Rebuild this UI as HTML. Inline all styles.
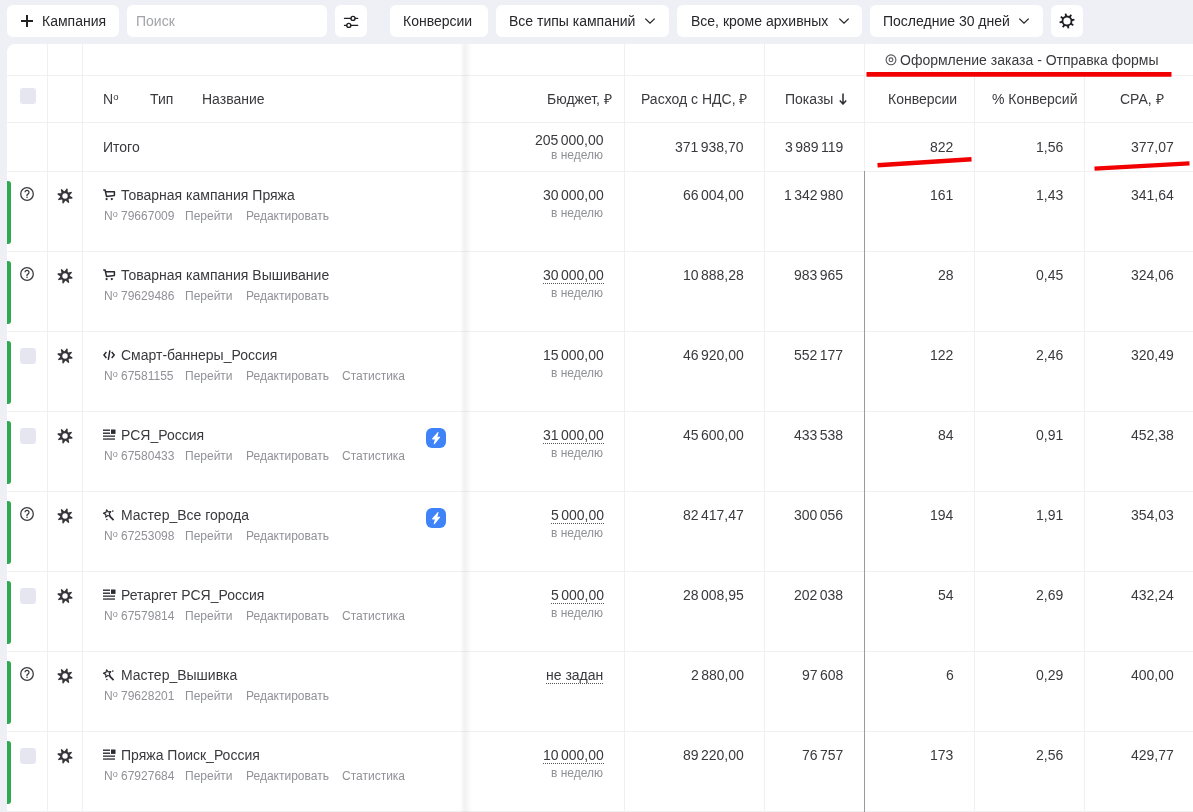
<!DOCTYPE html>
<html><head><meta charset="utf-8"><style>
html,body{margin:0;padding:0;}
body{width:1193px;height:812px;overflow:hidden;position:relative;background:#eff0f6;font-family:"Liberation Sans",sans-serif;color:#2b2b2b;}
.t{position:absolute;white-space:nowrap;will-change:transform;}
</style></head><body>
<div style="position:absolute;left:7px;top:5px;width:112px;height:32px;background:#fff;border-radius:6px;"></div>
<div style="position:absolute;left:21px;top:20px;width:12px;height:2px;background:#222;"></div>
<div style="position:absolute;left:26px;top:15px;width:2px;height:12px;background:#222;"></div>
<div class="t" style="left:42px;top:13.65px;font-size:14px;line-height:14px;color:#26262b;">Кампания</div>
<div style="position:absolute;left:127px;top:5px;width:200px;height:32px;background:#fff;border-radius:6px;"></div>
<div class="t" style="left:136px;top:13.65px;font-size:14px;line-height:14px;color:#a3a4a8;">Поиск</div>
<div style="position:absolute;left:335px;top:5px;width:32px;height:32px;background:#fff;border-radius:6px;"></div>
<svg style="position:absolute;left:343px;top:13px" width="16" height="16" viewBox="0 0 16 16"><g stroke="#1f1f24" stroke-width="1.4" fill="none" stroke-linecap="round"><line x1="1.5" y1="5.4" x2="14.6" y2="5.4"/><line x1="1.5" y1="12.4" x2="14.6" y2="12.4"/><circle cx="10" cy="5.4" r="2" fill="#fff"/><circle cx="5.8" cy="12.4" r="2" fill="#fff"/></g></svg>
<div style="position:absolute;left:390px;top:5px;width:98px;height:32px;background:#fff;border-radius:6px;"></div>
<div class="t" style="left:403px;top:13.65px;font-size:14px;line-height:14px;color:#26262b;">Конверсии</div>
<div style="position:absolute;left:496px;top:5px;width:173px;height:32px;background:#fff;border-radius:6px;"></div>
<div class="t" style="left:509px;top:13.65px;font-size:14px;line-height:14px;color:#26262b;">Все типы кампаний</div>
<svg style="position:absolute;left:643.5px;top:15px" width="12" height="12" viewBox="0 0 12 12"><path d="M1.3 3.6 L6 8.1 L10.7 3.6" stroke="#222" stroke-width="1.3" fill="none"/></svg>
<div style="position:absolute;left:677px;top:5px;width:185px;height:32px;background:#fff;border-radius:6px;"></div>
<div class="t" style="left:691px;top:13.65px;font-size:14px;line-height:14px;color:#26262b;">Все, кроме архивных</div>
<svg style="position:absolute;left:837.5px;top:15px" width="12" height="12" viewBox="0 0 12 12"><path d="M1.3 3.6 L6 8.1 L10.7 3.6" stroke="#222" stroke-width="1.3" fill="none"/></svg>
<div style="position:absolute;left:870px;top:5px;width:173px;height:32px;background:#fff;border-radius:6px;"></div>
<div class="t" style="left:883px;top:13.65px;font-size:14px;line-height:14px;color:#26262b;">Последние 30 дней</div>
<svg style="position:absolute;left:1018px;top:15px" width="12" height="12" viewBox="0 0 12 12"><path d="M1.3 3.6 L6 8.1 L10.7 3.6" stroke="#222" stroke-width="1.3" fill="none"/></svg>
<div style="position:absolute;left:1051px;top:5px;width:32px;height:32px;background:#fff;border-radius:6px;"></div>
<svg style="position:absolute;left:1056.8px;top:10.899999999999999px" width="20" height="20" viewBox="0 0 20 20"><path fill="#1f1f24" fill-rule="evenodd" d="M8.01 4.98 L7.73 2.75 L9.39 2.42 L9.96 4.60 L11.08 4.71 L12.14 5.04 L13.52 3.26 L14.93 4.21 L13.79 6.16 L14.50 7.02 L15.02 8.01 L17.25 7.73 L17.58 9.39 L15.40 9.96 L15.29 11.08 L14.96 12.14 L16.74 13.52 L15.79 14.93 L13.84 13.79 L12.98 14.50 L11.99 15.02 L12.27 17.25 L10.61 17.58 L10.04 15.40 L8.92 15.29 L7.86 14.96 L6.48 16.74 L5.07 15.79 L6.21 13.84 L5.50 12.98 L4.98 11.99 L2.75 12.27 L2.42 10.61 L4.60 10.04 L4.71 8.92 L5.04 7.86 L3.26 6.48 L4.21 5.07 L6.16 6.21 L7.02 5.50Z M13.60 10.00 A3.6 3.6 0 1 0 6.40 10.00 A3.6 3.6 0 1 0 13.60 10.00Z"/></svg>
<div style="position:absolute;left:7px;top:44px;width:1200px;height:800px;background:#fff;border-top-left-radius:8px;"></div>
<div style="position:absolute;left:7px;top:75px;width:1193px;height:1px;background:#f0f0f3;"></div>
<div style="position:absolute;left:7px;top:122px;width:1193px;height:1px;background:#f0f0f3;"></div>
<div style="position:absolute;left:7px;top:171px;width:1193px;height:1px;background:#f0f0f3;"></div>
<div style="position:absolute;left:7px;top:251px;width:1193px;height:1px;background:#f0f0f3;"></div>
<div style="position:absolute;left:7px;top:331px;width:1193px;height:1px;background:#f0f0f3;"></div>
<div style="position:absolute;left:7px;top:411px;width:1193px;height:1px;background:#f0f0f3;"></div>
<div style="position:absolute;left:7px;top:491px;width:1193px;height:1px;background:#f0f0f3;"></div>
<div style="position:absolute;left:7px;top:571px;width:1193px;height:1px;background:#f0f0f3;"></div>
<div style="position:absolute;left:7px;top:651px;width:1193px;height:1px;background:#f0f0f3;"></div>
<div style="position:absolute;left:7px;top:731px;width:1193px;height:1px;background:#f0f0f3;"></div>
<div style="position:absolute;left:7px;top:811px;width:1193px;height:1px;background:#f0f0f3;"></div>
<div style="position:absolute;left:47px;top:44px;width:1px;height:770px;background:#f0f0f3;"></div>
<div style="position:absolute;left:82px;top:44px;width:1px;height:770px;background:#f0f0f3;"></div>
<div style="position:absolute;left:624px;top:44px;width:1px;height:770px;background:#f0f0f3;"></div>
<div style="position:absolute;left:764px;top:44px;width:1px;height:770px;background:#f0f0f3;"></div>
<div style="position:absolute;left:974px;top:75px;width:1px;height:740px;background:#f0f0f3;"></div>
<div style="position:absolute;left:1084px;top:75px;width:1px;height:740px;background:#f0f0f3;"></div>
<div style="position:absolute;left:864px;top:44px;width:1px;height:127px;background:#f0f0f3;"></div>
<div style="position:absolute;left:864px;top:171px;width:1px;height:650px;background:#9a9a9e;"></div>
<div style="position:absolute;left:461px;top:44px;width:11px;height:770px;background:linear-gradient(to right, rgba(0,0,0,0.015), rgba(0,0,0,0.05) 35%, rgba(0,0,0,0) 100%);"></div>
<svg style="position:absolute;left:884px;top:53px" width="14" height="14" viewBox="0 0 14 14"><circle cx="7" cy="6.8" r="4.9" stroke="#55555a" stroke-width="1.1" fill="none"/><circle cx="7" cy="6.8" r="1.9" stroke="#55555a" stroke-width="1.1" fill="none"/></svg>
<div class="t" style="left:900px;top:53.15px;font-size:14px;line-height:14px;color:#3a3a3e;">Оформление заказа - Отправка формы</div>
<svg style="position:absolute;left:0;top:0" width="1193" height="812"><g stroke="#f20000" stroke-linecap="butt" fill="none"><line x1="866.5" y1="74.4" x2="1171.5" y2="74.4" stroke-width="4.8"/><line x1="877.5" y1="165.3" x2="971.5" y2="159.3" stroke-width="4.6"/><line x1="1094.5" y1="168.6" x2="1189.5" y2="163.4" stroke-width="4.4"/></g></svg>
<div style="position:absolute;left:20px;top:88px;width:16px;height:16px;background:#e5e6f0;border-radius:3px;"></div>
<div class="t" style="left:103px;top:92.15px;font-size:14px;line-height:14px;color:#3a3a3e;">N<span style="font-size:9.5px;position:relative;top:-4px">o</span></div>
<div class="t" style="left:149.5px;top:92.15px;font-size:14px;line-height:14px;color:#3a3a3e;">Тип</div>
<div class="t" style="left:202px;top:92.15px;font-size:14px;line-height:14px;color:#3a3a3e;">Название</div>
<div class="t" style="right:581px;top:92.15px;font-size:14px;line-height:14px;color:#3a3a3e;text-align:right;">Бюджет, ₽</div>
<div class="t" style="right:445.5px;top:92.15px;font-size:14px;line-height:14px;color:#3a3a3e;text-align:right;">Расход с НДС, ₽</div>
<div class="t" style="right:359.5px;top:92.15px;font-size:14px;line-height:14px;color:#3a3a3e;text-align:right;">Показы</div>
<svg style="position:absolute;left:839px;top:93px" width="8" height="12" viewBox="0 0 8 12"><path d="M4 0.5V11M0.8 7.6L4 11L7.2 7.6" stroke="#2b2b30" stroke-width="1.5" fill="none"/></svg>
<div class="t" style="right:236px;top:92.15px;font-size:14px;line-height:14px;color:#3a3a3e;text-align:right;">Конверсии</div>
<div class="t" style="right:115px;top:92.15px;font-size:14px;line-height:14px;color:#3a3a3e;text-align:right;">% Конверсий</div>
<div class="t" style="right:29px;top:92.15px;font-size:14px;line-height:14px;color:#3a3a3e;text-align:right;">CPA, ₽</div>
<div class="t" style="left:103px;top:140.15px;font-size:14px;line-height:14px;color:#3a3a3e;">Итого</div>
<div class="t" style="right:589.5px;top:133.15px;font-size:14px;line-height:14px;color:#3a3a3e;text-align:right;word-spacing:-1.5px;">205 000,00</div>
<div class="t" style="right:589.5px;top:149.34px;font-size:12px;line-height:12px;color:#909197;text-align:right;">в неделю</div>
<div class="t" style="right:449.5px;top:140.15px;font-size:14px;line-height:14px;color:#3a3a3e;text-align:right;word-spacing:-1.5px;">371 938,70</div>
<div class="t" style="right:350px;top:140.15px;font-size:14px;line-height:14px;color:#3a3a3e;text-align:right;word-spacing:-1.5px;">3 989 119</div>
<div class="t" style="right:239.5px;top:140.15px;font-size:14px;line-height:14px;color:#3a3a3e;text-align:right;">822</div>
<div class="t" style="right:129.5px;top:140.15px;font-size:14px;line-height:14px;color:#3a3a3e;text-align:right;">1,56</div>
<div class="t" style="right:19px;top:140.15px;font-size:14px;line-height:14px;color:#3a3a3e;text-align:right;">377,07</div>
<div style="position:absolute;left:7px;top:181px;width:4px;height:63px;background:#2fa84f;border-radius:0 3px 3px 0;"></div>
<svg style="position:absolute;left:19px;top:186px" width="16" height="16" viewBox="0 0 16 16"><circle cx="8" cy="8" r="6.3" stroke="#3a3a40" stroke-width="1.3" fill="none"/><path d="M6 6.3a2 2 0 1 1 2.9 1.8c-0.6 0.3-0.9 0.7-0.9 1.3v0.5" stroke="#3a3a40" stroke-width="1.3" fill="none"/><circle cx="8" cy="11.3" r="0.8" fill="#3a3a40"/></svg>
<svg style="position:absolute;left:54.8px;top:185.6px" width="20" height="20" viewBox="0 0 20 20"><path fill="#35353d" fill-rule="evenodd" d="M9.87 5.10 L11.59 2.47 L12.65 2.77 L12.71 5.92 L13.05 6.17 L13.37 6.44 L16.45 5.80 L16.98 6.76 L14.80 9.03 L14.87 9.45 L14.90 9.87 L17.53 11.59 L17.23 12.65 L14.08 12.71 L13.83 13.05 L13.56 13.37 L14.20 16.45 L13.24 16.98 L10.97 14.80 L10.55 14.87 L10.13 14.90 L8.41 17.53 L7.35 17.23 L7.29 14.08 L6.95 13.83 L6.63 13.56 L3.55 14.20 L3.02 13.24 L5.20 10.97 L5.13 10.55 L5.10 10.13 L2.47 8.41 L2.77 7.35 L5.92 7.29 L6.17 6.95 L6.44 6.63 L5.80 3.55 L6.76 3.02 L9.03 5.20 L9.45 5.13Z M12.70 10.00 A2.7 2.7 0 1 0 7.30 10.00 A2.7 2.7 0 1 0 12.70 10.00Z"/></svg>
<svg style="position:absolute;left:103px;top:189px" width="14" height="12" viewBox="0 0 14 12"><path d="M0.2 1H2.1L3.5 7.4L11.4 6.6V2.7H2.8" stroke="#2b2b33" stroke-width="1.5" fill="none" stroke-linejoin="round"/><circle cx="3.6" cy="10.1" r="1.15" fill="#2b2b33"/><circle cx="8.8" cy="10.1" r="1.15" fill="#2b2b33"/></svg>
<div class="t" style="left:121.2px;top:188.15px;font-size:14px;line-height:14px;color:#3a3a3e;">Товарная кампания Пряжа</div>
<div class="t" style="left:103.5px;top:209.84px;font-size:12px;line-height:12px;color:#909197;">N<span style="font-size:9px;position:relative;top:-3.2px">o</span> 79667009</div>
<div class="t" style="left:184.8px;top:209.84px;font-size:12px;line-height:12px;color:#909197;">Перейти</div>
<div class="t" style="left:245.8px;top:209.84px;font-size:12px;line-height:12px;color:#909197;">Редактировать</div>
<div class="t" style="right:589.5px;top:188.15px;font-size:14px;line-height:14px;color:#3a3a3e;text-align:right;word-spacing:-1.5px;">30 000,00</div>
<div class="t" style="right:589.5px;top:207.34px;font-size:12px;line-height:12px;color:#909197;text-align:right;">в неделю</div>
<div class="t" style="right:449.5px;top:188.15px;font-size:14px;line-height:14px;color:#3a3a3e;text-align:right;word-spacing:-1.5px;">66 004,00</div>
<div class="t" style="right:350px;top:188.15px;font-size:14px;line-height:14px;color:#3a3a3e;text-align:right;word-spacing:-1.5px;">1 342 980</div>
<div class="t" style="right:239.5px;top:188.15px;font-size:14px;line-height:14px;color:#3a3a3e;text-align:right;">161</div>
<div class="t" style="right:129.5px;top:188.15px;font-size:14px;line-height:14px;color:#3a3a3e;text-align:right;">1,43</div>
<div class="t" style="right:19px;top:188.15px;font-size:14px;line-height:14px;color:#3a3a3e;text-align:right;">341,64</div>
<div style="position:absolute;left:7px;top:261px;width:4px;height:63px;background:#2fa84f;border-radius:0 3px 3px 0;"></div>
<svg style="position:absolute;left:19px;top:266px" width="16" height="16" viewBox="0 0 16 16"><circle cx="8" cy="8" r="6.3" stroke="#3a3a40" stroke-width="1.3" fill="none"/><path d="M6 6.3a2 2 0 1 1 2.9 1.8c-0.6 0.3-0.9 0.7-0.9 1.3v0.5" stroke="#3a3a40" stroke-width="1.3" fill="none"/><circle cx="8" cy="11.3" r="0.8" fill="#3a3a40"/></svg>
<svg style="position:absolute;left:54.8px;top:265.6px" width="20" height="20" viewBox="0 0 20 20"><path fill="#35353d" fill-rule="evenodd" d="M9.87 5.10 L11.59 2.47 L12.65 2.77 L12.71 5.92 L13.05 6.17 L13.37 6.44 L16.45 5.80 L16.98 6.76 L14.80 9.03 L14.87 9.45 L14.90 9.87 L17.53 11.59 L17.23 12.65 L14.08 12.71 L13.83 13.05 L13.56 13.37 L14.20 16.45 L13.24 16.98 L10.97 14.80 L10.55 14.87 L10.13 14.90 L8.41 17.53 L7.35 17.23 L7.29 14.08 L6.95 13.83 L6.63 13.56 L3.55 14.20 L3.02 13.24 L5.20 10.97 L5.13 10.55 L5.10 10.13 L2.47 8.41 L2.77 7.35 L5.92 7.29 L6.17 6.95 L6.44 6.63 L5.80 3.55 L6.76 3.02 L9.03 5.20 L9.45 5.13Z M12.70 10.00 A2.7 2.7 0 1 0 7.30 10.00 A2.7 2.7 0 1 0 12.70 10.00Z"/></svg>
<svg style="position:absolute;left:103px;top:269px" width="14" height="12" viewBox="0 0 14 12"><path d="M0.2 1H2.1L3.5 7.4L11.4 6.6V2.7H2.8" stroke="#2b2b33" stroke-width="1.5" fill="none" stroke-linejoin="round"/><circle cx="3.6" cy="10.1" r="1.15" fill="#2b2b33"/><circle cx="8.8" cy="10.1" r="1.15" fill="#2b2b33"/></svg>
<div class="t" style="left:121.2px;top:268.15px;font-size:14px;line-height:14px;color:#3a3a3e;">Товарная кампания Вышивание</div>
<div class="t" style="left:103.5px;top:289.84px;font-size:12px;line-height:12px;color:#909197;">N<span style="font-size:9px;position:relative;top:-3.2px">o</span> 79629486</div>
<div class="t" style="left:184.8px;top:289.84px;font-size:12px;line-height:12px;color:#909197;">Перейти</div>
<div class="t" style="left:245.8px;top:289.84px;font-size:12px;line-height:12px;color:#909197;">Редактировать</div>
<div class="t" style="right:589.5px;top:268.15px;font-size:14px;line-height:14px;color:#3a3a3e;text-align:right;word-spacing:-1.5px;border-bottom:1px dotted #555;line-height:15px;">30 000,00</div>
<div class="t" style="right:589.5px;top:287.34px;font-size:12px;line-height:12px;color:#909197;text-align:right;">в неделю</div>
<div class="t" style="right:449.5px;top:268.15px;font-size:14px;line-height:14px;color:#3a3a3e;text-align:right;word-spacing:-1.5px;">10 888,28</div>
<div class="t" style="right:350px;top:268.15px;font-size:14px;line-height:14px;color:#3a3a3e;text-align:right;word-spacing:-1.5px;">983 965</div>
<div class="t" style="right:239.5px;top:268.15px;font-size:14px;line-height:14px;color:#3a3a3e;text-align:right;">28</div>
<div class="t" style="right:129.5px;top:268.15px;font-size:14px;line-height:14px;color:#3a3a3e;text-align:right;">0,45</div>
<div class="t" style="right:19px;top:268.15px;font-size:14px;line-height:14px;color:#3a3a3e;text-align:right;">324,06</div>
<div style="position:absolute;left:7px;top:341px;width:4px;height:63px;background:#2fa84f;border-radius:0 3px 3px 0;"></div>
<div style="position:absolute;left:20px;top:348px;width:16px;height:16px;background:#e5e6f0;border-radius:3px;"></div>
<svg style="position:absolute;left:54.8px;top:345.6px" width="20" height="20" viewBox="0 0 20 20"><path fill="#35353d" fill-rule="evenodd" d="M9.87 5.10 L11.59 2.47 L12.65 2.77 L12.71 5.92 L13.05 6.17 L13.37 6.44 L16.45 5.80 L16.98 6.76 L14.80 9.03 L14.87 9.45 L14.90 9.87 L17.53 11.59 L17.23 12.65 L14.08 12.71 L13.83 13.05 L13.56 13.37 L14.20 16.45 L13.24 16.98 L10.97 14.80 L10.55 14.87 L10.13 14.90 L8.41 17.53 L7.35 17.23 L7.29 14.08 L6.95 13.83 L6.63 13.56 L3.55 14.20 L3.02 13.24 L5.20 10.97 L5.13 10.55 L5.10 10.13 L2.47 8.41 L2.77 7.35 L5.92 7.29 L6.17 6.95 L6.44 6.63 L5.80 3.55 L6.76 3.02 L9.03 5.20 L9.45 5.13Z M12.70 10.00 A2.7 2.7 0 1 0 7.30 10.00 A2.7 2.7 0 1 0 12.70 10.00Z"/></svg>
<svg style="position:absolute;left:103px;top:349px" width="13" height="11" viewBox="0 0 13 11"><path d="M3.4 3.1L0.9 6L3.4 8.9M8.7 3.1L11.2 6L8.7 8.9M6.9 1.3L5.3 10.8" stroke="#2b2b33" stroke-width="1.5" fill="none"/></svg>
<div class="t" style="left:121.2px;top:348.15px;font-size:14px;line-height:14px;color:#3a3a3e;">Смарт-баннеры_Россия</div>
<div class="t" style="left:103.5px;top:369.84px;font-size:12px;line-height:12px;color:#909197;">N<span style="font-size:9px;position:relative;top:-3.2px">o</span> 67581155</div>
<div class="t" style="left:184.8px;top:369.84px;font-size:12px;line-height:12px;color:#909197;">Перейти</div>
<div class="t" style="left:245.8px;top:369.84px;font-size:12px;line-height:12px;color:#909197;">Редактировать</div>
<div class="t" style="left:342px;top:369.84px;font-size:12px;line-height:12px;color:#909197;">Статистика</div>
<div class="t" style="right:589.5px;top:348.15px;font-size:14px;line-height:14px;color:#3a3a3e;text-align:right;word-spacing:-1.5px;">15 000,00</div>
<div class="t" style="right:589.5px;top:367.34px;font-size:12px;line-height:12px;color:#909197;text-align:right;">в неделю</div>
<div class="t" style="right:449.5px;top:348.15px;font-size:14px;line-height:14px;color:#3a3a3e;text-align:right;word-spacing:-1.5px;">46 920,00</div>
<div class="t" style="right:350px;top:348.15px;font-size:14px;line-height:14px;color:#3a3a3e;text-align:right;word-spacing:-1.5px;">552 177</div>
<div class="t" style="right:239.5px;top:348.15px;font-size:14px;line-height:14px;color:#3a3a3e;text-align:right;">122</div>
<div class="t" style="right:129.5px;top:348.15px;font-size:14px;line-height:14px;color:#3a3a3e;text-align:right;">2,46</div>
<div class="t" style="right:19px;top:348.15px;font-size:14px;line-height:14px;color:#3a3a3e;text-align:right;">320,49</div>
<div style="position:absolute;left:7px;top:421px;width:4px;height:63px;background:#2fa84f;border-radius:0 3px 3px 0;"></div>
<div style="position:absolute;left:20px;top:428px;width:16px;height:16px;background:#e5e6f0;border-radius:3px;"></div>
<svg style="position:absolute;left:54.8px;top:425.6px" width="20" height="20" viewBox="0 0 20 20"><path fill="#35353d" fill-rule="evenodd" d="M9.87 5.10 L11.59 2.47 L12.65 2.77 L12.71 5.92 L13.05 6.17 L13.37 6.44 L16.45 5.80 L16.98 6.76 L14.80 9.03 L14.87 9.45 L14.90 9.87 L17.53 11.59 L17.23 12.65 L14.08 12.71 L13.83 13.05 L13.56 13.37 L14.20 16.45 L13.24 16.98 L10.97 14.80 L10.55 14.87 L10.13 14.90 L8.41 17.53 L7.35 17.23 L7.29 14.08 L6.95 13.83 L6.63 13.56 L3.55 14.20 L3.02 13.24 L5.20 10.97 L5.13 10.55 L5.10 10.13 L2.47 8.41 L2.77 7.35 L5.92 7.29 L6.17 6.95 L6.44 6.63 L5.80 3.55 L6.76 3.02 L9.03 5.20 L9.45 5.13Z M12.70 10.00 A2.7 2.7 0 1 0 7.30 10.00 A2.7 2.7 0 1 0 12.70 10.00Z"/></svg>
<svg style="position:absolute;left:103px;top:429px" width="13" height="11" viewBox="0 0 13 11"><g fill="#2b2b33"><rect x="0" y="0.5" width="7" height="1.4"/><rect x="0" y="3.5" width="7" height="1.4"/><rect x="8" y="0.5" width="4.5" height="4.4"/><rect x="0" y="6.5" width="12" height="1.3"/><rect x="0" y="9.4" width="12" height="1.3"/></g></svg>
<div class="t" style="left:121.2px;top:428.15px;font-size:14px;line-height:14px;color:#3a3a3e;">РСЯ_Россия</div>
<div class="t" style="left:103.5px;top:449.84px;font-size:12px;line-height:12px;color:#909197;">N<span style="font-size:9px;position:relative;top:-3.2px">o</span> 67580433</div>
<div class="t" style="left:184.8px;top:449.84px;font-size:12px;line-height:12px;color:#909197;">Перейти</div>
<div class="t" style="left:245.8px;top:449.84px;font-size:12px;line-height:12px;color:#909197;">Редактировать</div>
<div class="t" style="left:342px;top:449.84px;font-size:12px;line-height:12px;color:#909197;">Статистика</div>
<svg style="position:absolute;left:426px;top:428px" width="20" height="20" viewBox="0 0 20 20"><rect width="20" height="20" rx="6" fill="#3f83f8"/><path d="M12 4.6L6.6 10.9H9.6L8.3 15.6L13.6 9.2H10.7Z" fill="#fff" stroke="#fff" stroke-width="1.1" stroke-linejoin="round"/></svg>
<div class="t" style="right:589.5px;top:428.15px;font-size:14px;line-height:14px;color:#3a3a3e;text-align:right;word-spacing:-1.5px;border-bottom:1px dotted #555;line-height:15px;">31 000,00</div>
<div class="t" style="right:589.5px;top:447.34px;font-size:12px;line-height:12px;color:#909197;text-align:right;">в неделю</div>
<div class="t" style="right:449.5px;top:428.15px;font-size:14px;line-height:14px;color:#3a3a3e;text-align:right;word-spacing:-1.5px;">45 600,00</div>
<div class="t" style="right:350px;top:428.15px;font-size:14px;line-height:14px;color:#3a3a3e;text-align:right;word-spacing:-1.5px;">433 538</div>
<div class="t" style="right:239.5px;top:428.15px;font-size:14px;line-height:14px;color:#3a3a3e;text-align:right;">84</div>
<div class="t" style="right:129.5px;top:428.15px;font-size:14px;line-height:14px;color:#3a3a3e;text-align:right;">0,91</div>
<div class="t" style="right:19px;top:428.15px;font-size:14px;line-height:14px;color:#3a3a3e;text-align:right;">452,38</div>
<div style="position:absolute;left:7px;top:501px;width:4px;height:63px;background:#2fa84f;border-radius:0 3px 3px 0;"></div>
<svg style="position:absolute;left:19px;top:506px" width="16" height="16" viewBox="0 0 16 16"><circle cx="8" cy="8" r="6.3" stroke="#3a3a40" stroke-width="1.3" fill="none"/><path d="M6 6.3a2 2 0 1 1 2.9 1.8c-0.6 0.3-0.9 0.7-0.9 1.3v0.5" stroke="#3a3a40" stroke-width="1.3" fill="none"/><circle cx="8" cy="11.3" r="0.8" fill="#3a3a40"/></svg>
<svg style="position:absolute;left:54.8px;top:505.6px" width="20" height="20" viewBox="0 0 20 20"><path fill="#35353d" fill-rule="evenodd" d="M9.87 5.10 L11.59 2.47 L12.65 2.77 L12.71 5.92 L13.05 6.17 L13.37 6.44 L16.45 5.80 L16.98 6.76 L14.80 9.03 L14.87 9.45 L14.90 9.87 L17.53 11.59 L17.23 12.65 L14.08 12.71 L13.83 13.05 L13.56 13.37 L14.20 16.45 L13.24 16.98 L10.97 14.80 L10.55 14.87 L10.13 14.90 L8.41 17.53 L7.35 17.23 L7.29 14.08 L6.95 13.83 L6.63 13.56 L3.55 14.20 L3.02 13.24 L5.20 10.97 L5.13 10.55 L5.10 10.13 L2.47 8.41 L2.77 7.35 L5.92 7.29 L6.17 6.95 L6.44 6.63 L5.80 3.55 L6.76 3.02 L9.03 5.20 L9.45 5.13Z M12.70 10.00 A2.7 2.7 0 1 0 7.30 10.00 A2.7 2.7 0 1 0 12.70 10.00Z"/></svg>
<svg style="position:absolute;left:103px;top:508.5px" width="13" height="12" viewBox="0 0 13 12"><path d="M3.59 0.79 L5.17 2.86 L7.78 2.65 L6.29 4.80 L7.30 7.21 L4.80 6.46 L2.81 8.16 L2.75 5.55 L0.52 4.19 L2.99 3.33Z" stroke="#2b2b33" stroke-width="1.2" fill="none" stroke-linejoin="round"/><path d="M6.6 7.2L10.6 11.1" stroke="#2b2b33" stroke-width="1.7"/><circle cx="9.8" cy="2.1" r="0.8" fill="#2b2b33"/><circle cx="3.9" cy="10.4" r="0.75" fill="#2b2b33"/></svg>
<div class="t" style="left:121.2px;top:508.15px;font-size:14px;line-height:14px;color:#3a3a3e;">Мастер_Все города</div>
<div class="t" style="left:103.5px;top:529.84px;font-size:12px;line-height:12px;color:#909197;">N<span style="font-size:9px;position:relative;top:-3.2px">o</span> 67253098</div>
<div class="t" style="left:184.8px;top:529.84px;font-size:12px;line-height:12px;color:#909197;">Перейти</div>
<div class="t" style="left:245.8px;top:529.84px;font-size:12px;line-height:12px;color:#909197;">Редактировать</div>
<svg style="position:absolute;left:426px;top:508px" width="20" height="20" viewBox="0 0 20 20"><rect width="20" height="20" rx="6" fill="#3f83f8"/><path d="M12 4.6L6.6 10.9H9.6L8.3 15.6L13.6 9.2H10.7Z" fill="#fff" stroke="#fff" stroke-width="1.1" stroke-linejoin="round"/></svg>
<div class="t" style="right:589.5px;top:508.15px;font-size:14px;line-height:14px;color:#3a3a3e;text-align:right;word-spacing:-1.5px;border-bottom:1px dotted #555;line-height:15px;">5 000,00</div>
<div class="t" style="right:589.5px;top:527.34px;font-size:12px;line-height:12px;color:#909197;text-align:right;">в неделю</div>
<div class="t" style="right:449.5px;top:508.15px;font-size:14px;line-height:14px;color:#3a3a3e;text-align:right;word-spacing:-1.5px;">82 417,47</div>
<div class="t" style="right:350px;top:508.15px;font-size:14px;line-height:14px;color:#3a3a3e;text-align:right;word-spacing:-1.5px;">300 056</div>
<div class="t" style="right:239.5px;top:508.15px;font-size:14px;line-height:14px;color:#3a3a3e;text-align:right;">194</div>
<div class="t" style="right:129.5px;top:508.15px;font-size:14px;line-height:14px;color:#3a3a3e;text-align:right;">1,91</div>
<div class="t" style="right:19px;top:508.15px;font-size:14px;line-height:14px;color:#3a3a3e;text-align:right;">354,03</div>
<div style="position:absolute;left:7px;top:581px;width:4px;height:63px;background:#2fa84f;border-radius:0 3px 3px 0;"></div>
<div style="position:absolute;left:20px;top:588px;width:16px;height:16px;background:#e5e6f0;border-radius:3px;"></div>
<svg style="position:absolute;left:54.8px;top:585.6px" width="20" height="20" viewBox="0 0 20 20"><path fill="#35353d" fill-rule="evenodd" d="M9.87 5.10 L11.59 2.47 L12.65 2.77 L12.71 5.92 L13.05 6.17 L13.37 6.44 L16.45 5.80 L16.98 6.76 L14.80 9.03 L14.87 9.45 L14.90 9.87 L17.53 11.59 L17.23 12.65 L14.08 12.71 L13.83 13.05 L13.56 13.37 L14.20 16.45 L13.24 16.98 L10.97 14.80 L10.55 14.87 L10.13 14.90 L8.41 17.53 L7.35 17.23 L7.29 14.08 L6.95 13.83 L6.63 13.56 L3.55 14.20 L3.02 13.24 L5.20 10.97 L5.13 10.55 L5.10 10.13 L2.47 8.41 L2.77 7.35 L5.92 7.29 L6.17 6.95 L6.44 6.63 L5.80 3.55 L6.76 3.02 L9.03 5.20 L9.45 5.13Z M12.70 10.00 A2.7 2.7 0 1 0 7.30 10.00 A2.7 2.7 0 1 0 12.70 10.00Z"/></svg>
<svg style="position:absolute;left:103px;top:589px" width="13" height="11" viewBox="0 0 13 11"><g fill="#2b2b33"><rect x="0" y="0.5" width="7" height="1.4"/><rect x="0" y="3.5" width="7" height="1.4"/><rect x="8" y="0.5" width="4.5" height="4.4"/><rect x="0" y="6.5" width="12" height="1.3"/><rect x="0" y="9.4" width="12" height="1.3"/></g></svg>
<div class="t" style="left:121.2px;top:588.15px;font-size:14px;line-height:14px;color:#3a3a3e;">Ретаргет РСЯ_Россия</div>
<div class="t" style="left:103.5px;top:609.84px;font-size:12px;line-height:12px;color:#909197;">N<span style="font-size:9px;position:relative;top:-3.2px">o</span> 67579814</div>
<div class="t" style="left:184.8px;top:609.84px;font-size:12px;line-height:12px;color:#909197;">Перейти</div>
<div class="t" style="left:245.8px;top:609.84px;font-size:12px;line-height:12px;color:#909197;">Редактировать</div>
<div class="t" style="left:342px;top:609.84px;font-size:12px;line-height:12px;color:#909197;">Статистика</div>
<div class="t" style="right:589.5px;top:588.15px;font-size:14px;line-height:14px;color:#3a3a3e;text-align:right;word-spacing:-1.5px;border-bottom:1px dotted #555;line-height:15px;">5 000,00</div>
<div class="t" style="right:589.5px;top:607.34px;font-size:12px;line-height:12px;color:#909197;text-align:right;">в неделю</div>
<div class="t" style="right:449.5px;top:588.15px;font-size:14px;line-height:14px;color:#3a3a3e;text-align:right;word-spacing:-1.5px;">28 008,95</div>
<div class="t" style="right:350px;top:588.15px;font-size:14px;line-height:14px;color:#3a3a3e;text-align:right;word-spacing:-1.5px;">202 038</div>
<div class="t" style="right:239.5px;top:588.15px;font-size:14px;line-height:14px;color:#3a3a3e;text-align:right;">54</div>
<div class="t" style="right:129.5px;top:588.15px;font-size:14px;line-height:14px;color:#3a3a3e;text-align:right;">2,69</div>
<div class="t" style="right:19px;top:588.15px;font-size:14px;line-height:14px;color:#3a3a3e;text-align:right;">432,24</div>
<div style="position:absolute;left:7px;top:661px;width:4px;height:63px;background:#2fa84f;border-radius:0 3px 3px 0;"></div>
<svg style="position:absolute;left:19px;top:666px" width="16" height="16" viewBox="0 0 16 16"><circle cx="8" cy="8" r="6.3" stroke="#3a3a40" stroke-width="1.3" fill="none"/><path d="M6 6.3a2 2 0 1 1 2.9 1.8c-0.6 0.3-0.9 0.7-0.9 1.3v0.5" stroke="#3a3a40" stroke-width="1.3" fill="none"/><circle cx="8" cy="11.3" r="0.8" fill="#3a3a40"/></svg>
<svg style="position:absolute;left:54.8px;top:665.6px" width="20" height="20" viewBox="0 0 20 20"><path fill="#35353d" fill-rule="evenodd" d="M9.87 5.10 L11.59 2.47 L12.65 2.77 L12.71 5.92 L13.05 6.17 L13.37 6.44 L16.45 5.80 L16.98 6.76 L14.80 9.03 L14.87 9.45 L14.90 9.87 L17.53 11.59 L17.23 12.65 L14.08 12.71 L13.83 13.05 L13.56 13.37 L14.20 16.45 L13.24 16.98 L10.97 14.80 L10.55 14.87 L10.13 14.90 L8.41 17.53 L7.35 17.23 L7.29 14.08 L6.95 13.83 L6.63 13.56 L3.55 14.20 L3.02 13.24 L5.20 10.97 L5.13 10.55 L5.10 10.13 L2.47 8.41 L2.77 7.35 L5.92 7.29 L6.17 6.95 L6.44 6.63 L5.80 3.55 L6.76 3.02 L9.03 5.20 L9.45 5.13Z M12.70 10.00 A2.7 2.7 0 1 0 7.30 10.00 A2.7 2.7 0 1 0 12.70 10.00Z"/></svg>
<svg style="position:absolute;left:103px;top:668.5px" width="13" height="12" viewBox="0 0 13 12"><path d="M3.59 0.79 L5.17 2.86 L7.78 2.65 L6.29 4.80 L7.30 7.21 L4.80 6.46 L2.81 8.16 L2.75 5.55 L0.52 4.19 L2.99 3.33Z" stroke="#2b2b33" stroke-width="1.2" fill="none" stroke-linejoin="round"/><path d="M6.6 7.2L10.6 11.1" stroke="#2b2b33" stroke-width="1.7"/><circle cx="9.8" cy="2.1" r="0.8" fill="#2b2b33"/><circle cx="3.9" cy="10.4" r="0.75" fill="#2b2b33"/></svg>
<div class="t" style="left:121.2px;top:668.15px;font-size:14px;line-height:14px;color:#3a3a3e;">Мастер_Вышивка</div>
<div class="t" style="left:103.5px;top:689.84px;font-size:12px;line-height:12px;color:#909197;">N<span style="font-size:9px;position:relative;top:-3.2px">o</span> 79628201</div>
<div class="t" style="left:184.8px;top:689.84px;font-size:12px;line-height:12px;color:#909197;">Перейти</div>
<div class="t" style="left:245.8px;top:689.84px;font-size:12px;line-height:12px;color:#909197;">Редактировать</div>
<div class="t" style="right:589.5px;top:668.15px;font-size:14px;line-height:14px;color:#3a3a3e;text-align:right;border-bottom:1px dotted #555;line-height:15px;">не задан</div>
<div class="t" style="right:449.5px;top:668.15px;font-size:14px;line-height:14px;color:#3a3a3e;text-align:right;word-spacing:-1.5px;">2 880,00</div>
<div class="t" style="right:350px;top:668.15px;font-size:14px;line-height:14px;color:#3a3a3e;text-align:right;word-spacing:-1.5px;">97 608</div>
<div class="t" style="right:239.5px;top:668.15px;font-size:14px;line-height:14px;color:#3a3a3e;text-align:right;">6</div>
<div class="t" style="right:129.5px;top:668.15px;font-size:14px;line-height:14px;color:#3a3a3e;text-align:right;">0,29</div>
<div class="t" style="right:19px;top:668.15px;font-size:14px;line-height:14px;color:#3a3a3e;text-align:right;">400,00</div>
<div style="position:absolute;left:7px;top:741px;width:4px;height:63px;background:#2fa84f;border-radius:0 3px 3px 0;"></div>
<div style="position:absolute;left:20px;top:748px;width:16px;height:16px;background:#e5e6f0;border-radius:3px;"></div>
<svg style="position:absolute;left:54.8px;top:745.6px" width="20" height="20" viewBox="0 0 20 20"><path fill="#35353d" fill-rule="evenodd" d="M9.87 5.10 L11.59 2.47 L12.65 2.77 L12.71 5.92 L13.05 6.17 L13.37 6.44 L16.45 5.80 L16.98 6.76 L14.80 9.03 L14.87 9.45 L14.90 9.87 L17.53 11.59 L17.23 12.65 L14.08 12.71 L13.83 13.05 L13.56 13.37 L14.20 16.45 L13.24 16.98 L10.97 14.80 L10.55 14.87 L10.13 14.90 L8.41 17.53 L7.35 17.23 L7.29 14.08 L6.95 13.83 L6.63 13.56 L3.55 14.20 L3.02 13.24 L5.20 10.97 L5.13 10.55 L5.10 10.13 L2.47 8.41 L2.77 7.35 L5.92 7.29 L6.17 6.95 L6.44 6.63 L5.80 3.55 L6.76 3.02 L9.03 5.20 L9.45 5.13Z M12.70 10.00 A2.7 2.7 0 1 0 7.30 10.00 A2.7 2.7 0 1 0 12.70 10.00Z"/></svg>
<svg style="position:absolute;left:103px;top:749px" width="13" height="11" viewBox="0 0 13 11"><g fill="#2b2b33"><rect x="0" y="0.5" width="7" height="1.4"/><rect x="0" y="3.5" width="7" height="1.4"/><rect x="8" y="0.5" width="4.5" height="4.4"/><rect x="0" y="6.5" width="12" height="1.3"/><rect x="0" y="9.4" width="12" height="1.3"/></g></svg>
<div class="t" style="left:121.2px;top:748.15px;font-size:14px;line-height:14px;color:#3a3a3e;">Пряжа Поиск_Россия</div>
<div class="t" style="left:103.5px;top:769.84px;font-size:12px;line-height:12px;color:#909197;">N<span style="font-size:9px;position:relative;top:-3.2px">o</span> 67927684</div>
<div class="t" style="left:184.8px;top:769.84px;font-size:12px;line-height:12px;color:#909197;">Перейти</div>
<div class="t" style="left:245.8px;top:769.84px;font-size:12px;line-height:12px;color:#909197;">Редактировать</div>
<div class="t" style="left:342px;top:769.84px;font-size:12px;line-height:12px;color:#909197;">Статистика</div>
<div class="t" style="right:589.5px;top:748.15px;font-size:14px;line-height:14px;color:#3a3a3e;text-align:right;word-spacing:-1.5px;border-bottom:1px dotted #555;line-height:15px;">10 000,00</div>
<div class="t" style="right:589.5px;top:767.34px;font-size:12px;line-height:12px;color:#909197;text-align:right;">в неделю</div>
<div class="t" style="right:449.5px;top:748.15px;font-size:14px;line-height:14px;color:#3a3a3e;text-align:right;word-spacing:-1.5px;">89 220,00</div>
<div class="t" style="right:350px;top:748.15px;font-size:14px;line-height:14px;color:#3a3a3e;text-align:right;word-spacing:-1.5px;">76 757</div>
<div class="t" style="right:239.5px;top:748.15px;font-size:14px;line-height:14px;color:#3a3a3e;text-align:right;">173</div>
<div class="t" style="right:129.5px;top:748.15px;font-size:14px;line-height:14px;color:#3a3a3e;text-align:right;">2,56</div>
<div class="t" style="right:19px;top:748.15px;font-size:14px;line-height:14px;color:#3a3a3e;text-align:right;">429,77</div>
</body></html>
